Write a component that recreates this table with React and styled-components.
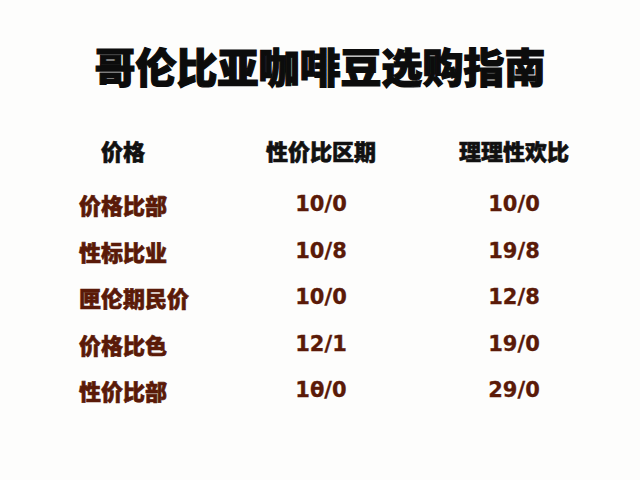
import React from "react";
import styled, { createGlobalStyle } from "styled-components";

const Global = createGlobalStyle`
  html, body { margin: 0; padding: 0; background: #fdfdfc; }
  body { font-family: "Noto Sans CJK SC", "Noto Sans", sans-serif; }
`;

const Page = styled.div`
  width: 640px;
  height: 480px;
  background: #fdfdfc;
  display: flex;
  flex-direction: column;
  align-items: stretch;
  box-sizing: border-box;
  padding-top: 40px;
`;

const Title = styled.h1`
  margin: 0;
  text-align: center;
  font-family: "Noto Sans CJK SC", sans-serif;
  font-weight: 900;
  font-size: 41px;
  line-height: 50px;
  color: #0c0c0c;
  -webkit-text-stroke: 1.2px #0c0c0c;
`;

const Table = styled.div`
  display: grid;
  grid-template-columns: 150px 184px 202px;
  grid-template-rows: 62px;
  grid-auto-rows: 46.5px;
  padding-left: 79px;
  margin-top: 29px;
`;

const HeadCell = styled.div`
  display: flex;
  align-items: center;
  justify-content: ${(p) => (p.$first ? "flex-start" : "center")};
  padding-left: ${(p) => (p.$first ? "22px" : "0")};
  font-family: "Noto Sans CJK SC", sans-serif;
  font-weight: 900;
  font-size: 22px;
  color: #111;
  -webkit-text-stroke: 0.6px #111;
`;

const NameCell = styled.div`
  display: flex;
  align-items: center;
  font-family: "Noto Sans CJK SC", sans-serif;
  font-weight: 900;
  font-size: 22px;
  color: #5a1a08;
  -webkit-text-stroke: 0.6px #5a1a08;
`;

const NumCell = styled.div`
  display: flex;
  align-items: center;
  justify-content: center;
  font-family: "DejaVu Sans", sans-serif;
  font-weight: 700;
  font-size: 21px;
  color: #5a1a08;
  -webkit-text-stroke: 0.3px #5a1a08;
`;

const HeaderRow = styled.div`
  display: contents;
`;

const rows = [
  ["价格比部", "10/0", "10/0"],
  ["性标比业", "10/8", "19/8"],
  ["匣伦期民价", "10/0", "12/8"],
  ["价格比色", "12/1", "19/0"],
  ["性价比部", "1θ/0", "29/0"],
];

export default function App() {
  return (
    <Page>
      <Global />
      <Title>哥伦比亚咖啡豆选购指南</Title>
      <Table>
        <HeaderRow>
          <HeadCell $first>价格</HeadCell>
          <HeadCell>性价比区期</HeadCell>
          <HeadCell>理理性欢比</HeadCell>
        </HeaderRow>
        {rows.map((r, i) => (
          <React.Fragment key={i}>
            <NameCell>{r[0]}</NameCell>
            <NumCell>{r[1]}</NumCell>
            <NumCell>{r[2]}</NumCell>
          </React.Fragment>
        ))}
      </Table>
    </Page>
  );
}
